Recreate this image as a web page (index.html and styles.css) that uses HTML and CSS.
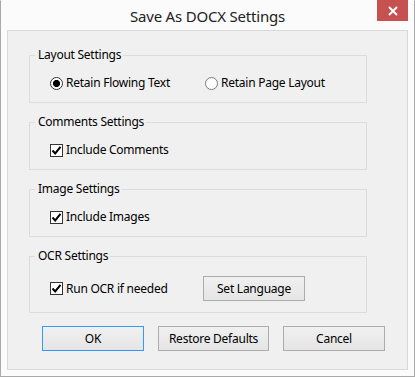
FILE: index.html
```html
<!DOCTYPE html>
<html>
<head>
<meta charset="utf-8">
<link rel="stylesheet" href="styles.css">
</head>
<body>
<div class="window">
  <div class="titlebar">
    <span class="title">Save As DOCX Settings</span>
    <div class="close"><svg width="10" height="10" viewBox="0 0 10 10"><path d="M1 1 L9 9 M9 1 L1 9" stroke="#fff" stroke-width="2" fill="none"/></svg></div>
  </div>
  <div class="client">
    <fieldset class="group">
      <legend>Layout Settings</legend>
      <div class="row">
        <label class="opt wide"><span class="radio checked"></span>Retain Flowing Text</label>
        <label class="opt"><span class="radio"></span>Retain Page Layout</label>
      </div>
    </fieldset>
    <fieldset class="group">
      <legend>Comments Settings</legend>
      <div class="row">
        <label class="opt"><span class="check"><svg width="11" height="11" viewBox="0 0 11 11"><path d="M1.5 5.5 L4.2 8.4 L9.5 1.8" stroke="#000" stroke-width="2" fill="none"/></svg></span>Include Comments</label>
      </div>
    </fieldset>
    <fieldset class="group">
      <legend>Image Settings</legend>
      <div class="row">
        <label class="opt"><span class="check"><svg width="11" height="11" viewBox="0 0 11 11"><path d="M1.5 5.5 L4.2 8.4 L9.5 1.8" stroke="#000" stroke-width="2" fill="none"/></svg></span>Include Images</label>
      </div>
    </fieldset>
    <fieldset class="group">
      <legend>OCR Settings</legend>
      <div class="row tall">
        <label class="opt ocr"><span class="check"><svg width="11" height="11" viewBox="0 0 11 11"><path d="M1.5 5.5 L4.2 8.4 L9.5 1.8" stroke="#000" stroke-width="2" fill="none"/></svg></span>Run OCR if needed</label>
        <button class="btn">Set Language</button>
      </div>
    </fieldset>
    <div class="buttons">
      <button class="btn ok">OK</button>
      <button class="btn restore">Restore Defaults</button>
      <button class="btn">Cancel</button>
    </div>
  </div>
</div>
</body>
</html>
```
FILE: styles.css
```css
html, body {
  margin: 0;
  padding: 0;
}
body {
  width: 415px;
  height: 377px;
  overflow: hidden;
  font-family: "Noto Sans", "Open Sans", sans-serif;
  font-size: 12px;
  letter-spacing: -0.25px;
  color: #000;
}
.window {
  box-sizing: border-box;
  width: 415px;
  height: 377px;
  border: 1px solid #a9a9a9;
  border-top-color: #fbfbfb;
  background: #fbfbfb;
  padding: 0 6px 6px;
  display: flex;
  flex-direction: column;
}
.titlebar {
  height: 29px;
  margin: 0 -6px;
  position: relative;
  display: flex;
  align-items: center;
  justify-content: center;
}
.title {
  font-size: 15px;
  letter-spacing: -0.2px;
  color: #222;
  padding-top: 1px;
}
.close {
  position: absolute;
  top: -1px;
  right: 6px;
  width: 31px;
  height: 21px;
  background: #c75050;
  display: flex;
  align-items: center;
  justify-content: center;
}
.client {
  flex: 1;
  box-sizing: border-box;
  border: 1px solid #d9d9d9;
  background: #f0f0f0;
  padding: 16px 0 0 21px;
  display: flex;
  flex-direction: column;
  gap: 11px;
}
.group {
  box-sizing: border-box;
  width: 338px;
  min-width: 0;
  margin: 0;
  padding: 0 0 10px 5px;
  border: 1px solid #dcdcdc;
}
.group legend {
  padding: 0 2px 0 3px;
  line-height: 16px;
  height: 16px;
}
.row {
  display: flex;
  align-items: center;
  height: 18px;
  padding: 11px 0 0 15px;
}
.row.tall {
  height: 27px;
}
.opt {
  display: flex;
  align-items: center;
  line-height: 16px;
}
.opt.wide {
  width: 155px;
}
.opt.ocr {
  width: 153px;
}
.radio {
  box-sizing: border-box;
  width: 13px;
  height: 13px;
  border: 1px solid #7a7a7a;
  border-radius: 50%;
  background: #fff;
  margin-right: 3px;
}
.radio.checked {
  border-color: #333;
  background: radial-gradient(circle, #000 3.2px, #fff 3.9px);
}
.check {
  box-sizing: border-box;
  width: 13px;
  height: 13px;
  border: 1px solid #333;
  background: #fff;
  margin-right: 3px;
  display: flex;
  align-items: center;
  justify-content: center;
}
.check svg {
  display: block;
}
.btn {
  box-sizing: border-box;
  width: 102px;
  height: 25px;
  padding: 0;
  border: 1px solid #acacac;
  background: linear-gradient(#f0f0f0, #e5e5e5);
  font-family: inherit;
  font-size: 12px;
  letter-spacing: -0.25px;
  color: #000;
}
.btn.ok {
  border-color: #3399ff;
}
.btn.restore {
  width: 111px;
}
.buttons {
  display: flex;
  gap: 14px;
  margin: 2px 0 0 13px;
}
```
